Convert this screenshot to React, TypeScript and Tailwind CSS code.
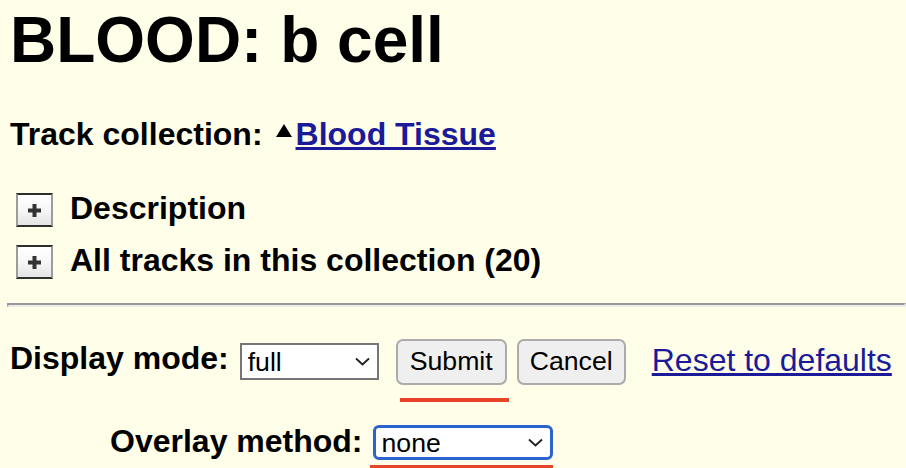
const Chevron = () => (
  <svg width="15" height="9" viewBox="0 0 15 9" fill="none">
    <path d="M1 1.5 L7.5 7.5 L14 1.5" stroke="#1f1f1f" strokeWidth="1.8" />
  </svg>
);

const PlusBox = () => (
  <div className="mt-[3px] ml-[6px] w-[37px] h-[34px] shrink-0 border-y-2 border-x-2 border-y-[#2e2e2e] border-x-[#9c9c9c] bg-gradient-to-b from-white via-[#f7f7f7] to-[#e4e4e4] flex items-center justify-center">
    <svg width="13" height="13" viewBox="0 0 13 13">
      <rect x="4.5" y="0" width="4" height="13" fill="#333" />
      <rect x="0" y="4.5" width="13" height="4" fill="#333" />
    </svg>
  </div>
);

const App = () => {
  return (
    <div className="w-full h-[468px] overflow-hidden bg-[#fffee8] text-black font-['Liberation_Sans',Arial,sans-serif]">
      <div className="pl-[10px] pt-[8px]">
        <h1 className="text-[64px] font-bold leading-[64px]">BLOOD: b cell</h1>

        <div className="mt-[44px] flex items-start text-[32px] font-bold leading-[36px]">
          <span>Track collection:</span>
          <svg className="ml-[13px] mt-[8px]" width="16" height="13" viewBox="0 0 16 13">
            <polygon points="8,0 16,13 0,13" fill="#000" />
          </svg>
          <a href="#" className="ml-[4px] text-[#1a1a9a] underline">
            Blood Tissue
          </a>
        </div>

        <div className="mt-[38px] flex items-start text-[32px] font-bold leading-[36px]">
          <PlusBox />
          <span className="ml-[17px]">Description</span>
        </div>
        <div className="mt-[15px] flex items-start text-[32px] font-bold leading-[36px]">
          <PlusBox />
          <span className="ml-[17px]">All tracks in this collection (20)</span>
        </div>
      </div>

      <div className="mt-[24px] ml-[7px] h-0 border-2 border-t-[#999999] border-l-[#999999] border-b-[#ececec] border-r-[#ececec]" />

      <div className="pl-[10px]">
        <div className="mt-[32px] flex items-start">
          <span className="mt-[1px] text-[32px] font-bold leading-[36px]">Display mode:</span>
          <div className="ml-[11px] mt-[4px] w-[139px] h-[37px] border-2 border-[#767676] bg-white flex items-center justify-between pl-[6px] pr-[7px] text-[26.67px]">
            <span>full</span>
            <Chevron />
          </div>
          <div className="relative ml-[17px]">
            <button className="w-[111px] h-[46px] pb-[4px] rounded-[7px] border-2 border-[#ababab] bg-[#efefef] text-[26.67px]">
              Submit
            </button>
            <div className="absolute left-[4px] top-[59px] w-[109px] h-[4px] bg-[#e6452b]" />
          </div>
          <button className="ml-[10px] w-[109px] h-[46px] pb-[4px] rounded-[7px] border-2 border-[#ababab] bg-[#efefef] text-[26.67px]">
            Cancel
          </button>
          <a href="#" className="ml-[26px] mt-[3px] text-[32px] leading-[36px] text-[#1a1a9a] underline">
            Reset to defaults
          </a>
        </div>

        <div className="mt-[38px] pl-[100px] flex items-start">
          <span className="text-[32px] font-bold leading-[36px]">Overlay method:</span>
          <div className="relative ml-[10px] mt-[2px]">
            <div className="w-[180px] h-[35px] border-[3px] border-[#2b63cf] rounded-[6px] bg-white flex items-center justify-between pl-[6px] pr-[7px] text-[26.67px]">
              <span>none</span>
              <Chevron />
            </div>
            <div className="absolute left-[-3px] top-[40px] w-[183px] h-[5px] bg-[#e6452b]" />
          </div>
        </div>
      </div>
    </div>
  );
};

export default App;
